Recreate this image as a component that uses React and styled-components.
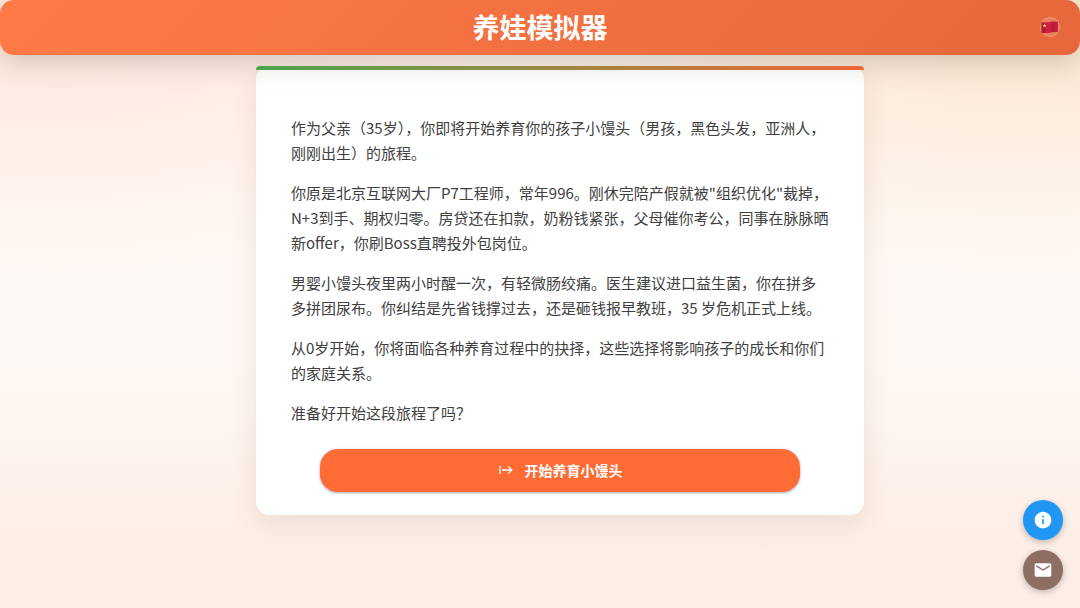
import React from "react";
import styled, { createGlobalStyle } from "styled-components";
import { MdInfo, MdEmail, MdStart } from "react-icons/md";

const GlobalStyle = createGlobalStyle`
  * {
    box-sizing: border-box;
  }

  body {
    margin: 0;
    min-height: 100vh;
    font-family: "Noto Sans CJK SC", sans-serif;
    color: #404040;
    background:
      radial-gradient(ellipse 55% 45% at 5% 0%, rgba(255, 107, 53, 0.15), transparent),
      radial-gradient(ellipse 55% 45% at 95% 0%, rgba(240, 165, 85, 0.26), transparent),
      linear-gradient(180deg, #fffaf6 0%, #fef8f4 60%, #fceee5 90%, #fceee5 100%);
  }
`;

const Header = styled.header`
  position: sticky;
  top: 0;
  z-index: 10;
  display: grid;
  grid-template-columns: 1fr auto 1fr;
  align-items: center;
  height: 55px;
  padding: 0 20px 1px;
  border-radius: 14px;
  background: linear-gradient(135deg, #ff7a47 0%, #e5673b 100%);
  box-shadow: 0 8px 28px rgba(60, 50, 40, 0.2);
`;

const Title = styled.h1`
  grid-column: 2;
  margin: 0;
  font-size: 27px;
  line-height: 40px;
  font-weight: 700;
  color: #fff;
`;

const LanguageButton = styled.button`
  justify-self: end;
  display: flex;
  align-items: center;
  justify-content: center;
  width: 20px;
  height: 20px;
  padding: 0;
  border: 1px solid rgba(255, 255, 255, 0.2);
  border-radius: 50%;
  background: rgba(255, 255, 255, 0.15);
  cursor: pointer;
`;

const Main = styled.main`
  padding: 11px 0 24px 40px;
`;

const Card = styled.section`
  max-width: 608px;
  margin: 0 auto;
  padding-bottom: 23px;
  border-radius: 14px;
  background: #fff;
  box-shadow: 0 8px 28px rgba(120, 70, 40, 0.12);

  &::before {
    content: "";
    display: block;
    height: 4px;
    border-radius: 14px 14px 0 0;
    background: linear-gradient(90deg, #4caf50, #ff6b35);
  }
`;

const Story = styled.div`
  display: flex;
  flex-direction: column;
  gap: 15px;
  padding: 45px 34px 24px 35px;
`;

const Paragraph = styled.p`
  margin: 0;
  font-size: 15px;
  line-height: 25px;
`;

const StartButton = styled.button`
  display: flex;
  align-items: center;
  justify-content: center;
  gap: 11px;
  width: 79%;
  height: 43px;
  margin: 0 auto;
  padding: 0 0 2px;
  border: none;
  border-radius: 18px;
  font-family: inherit;
  font-size: 14px;
  font-weight: 700;
  color: #fff;
  background: #ff6b35;
  box-shadow: 0 1px 3px rgba(0, 0, 0, 0.35);
  cursor: pointer;
`;

const FloatingActions = styled.nav`
  position: fixed;
  right: 17px;
  bottom: 18px;
  display: flex;
  flex-direction: column;
  gap: 10px;
`;

const RoundButton = styled.button`
  display: flex;
  align-items: center;
  justify-content: center;
  width: 40px;
  height: 40px;
  padding: 0;
  border: none;
  border-radius: 50%;
  font-size: 20px;
  color: #fff;
  background: ${(props) => props.$color};
  box-shadow: 0 2px 6px rgba(0, 0, 0, 0.25);
  cursor: pointer;
`;

const paragraphs = [
  "作为父亲（35岁），你即将开始养育你的孩子小馒头（男孩，黑色头发，亚洲人，刚刚出生）的旅程。",
  "你原是北京互联网大厂P7工程师，常年996。刚休完陪产假就被\"组织优化\"裁掉，N+3到手、期权归零。房贷还在扣款，奶粉钱紧张，父母催你考公，同事在脉脉晒新offer，你刷Boss直聘投外包岗位。",
  "男婴小馒头夜里两小时醒一次，有轻微肠绞痛。医生建议进口益生菌，你在拼多多拼团尿布。你纠结是先省钱撑过去，还是砸钱报早教班，35 岁危机正式上线。",
  "从0岁开始，你将面临各种养育过程中的抉择，这些选择将影响孩子的成长和你们的家庭关系。",
  "准备好开始这段旅程了吗？",
];

function FlagIcon() {
  return (
    <svg width="18" height="14" viewBox="0 0 18 14" aria-hidden="true">
      <defs>
        <linearGradient id="flag" x1="0" x2="1" y1="0" y2="0">
          <stop offset="0" stopColor="#a8122a" />
          <stop offset="0.4" stopColor="#d32340" />
          <stop offset="0.7" stopColor="#b81a38" />
          <stop offset="1" stopColor="#cf2443" />
        </linearGradient>
      </defs>
      <path d="M0.500 2.400C4 3 7 2.200 10 1.800C13 1.400 15 1.600 17 1.800V12.200C15 11.800 13 11.800 10 12.400C7 13 4 13.200 0.500 12.800Z" fill="url(#flag)" />
      <path d="M3.500 3.600L4.100 5L5.500 5.100L4.500 6L4.800 7.400L3.500 6.600L2.200 7.400L2.500 6L1.500 5.100L2.900 5Z" fill="#ffd35c" />
    </svg>
  );
}

function App() {
  return (
    <>
      <GlobalStyle />
      <Header>
        <Title>养娃模拟器</Title>
        <LanguageButton aria-label="中文">
          <FlagIcon />
        </LanguageButton>
      </Header>
      <Main>
        <Card>
          <Story>
            {paragraphs.map((text) => (
              <Paragraph key={text}>{text}</Paragraph>
            ))}
          </Story>
          <StartButton>
            <MdStart size={16} />
            开始养育小馒头
          </StartButton>
        </Card>
      </Main>
      <FloatingActions>
        <RoundButton $color="#2196f3" aria-label="关于">
          <MdInfo />
        </RoundButton>
        <RoundButton $color="#8d6e63" aria-label="邮件">
          <MdEmail />
        </RoundButton>
      </FloatingActions>
    </>
  );
}

export default App;
